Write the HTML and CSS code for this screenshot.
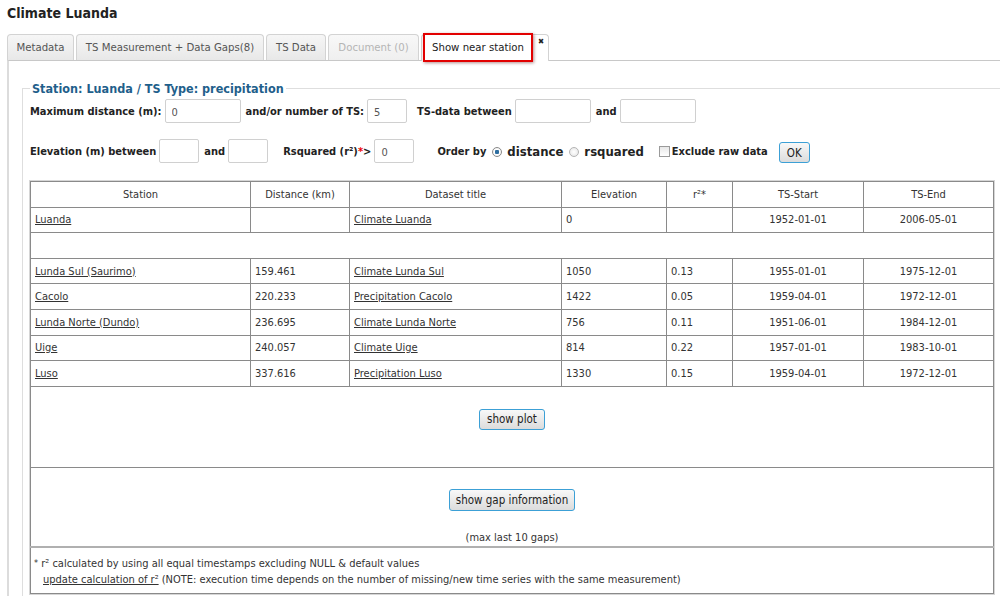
FILE: index.html
```html
<!DOCTYPE html>
<html>
<head>
<meta charset="utf-8">
<title>Climate Luanda</title>
<link rel="stylesheet" href="styles.css">
</head>
<body>
<h1 class="title">Climate Luanda</h1>
<div class="tabs">
  <ul class="tab-nav">
    <li class="tab t-meta">Metadata</li>
    <li class="tab t-meas">TS Measurement + Data Gaps(8)</li>
    <li class="tab t-data">TS Data</li>
    <li class="tab t-doc disabled">Document (0)</li>
    <li class="tab active"><span class="tab-label">Show near station</span><span class="tab-close">&#x2716;</span></li>
  </ul>
  <div class="panel">
    <fieldset class="station">
      <legend class="legend">Station: Luanda / TS Type: precipitation</legend>
      <div class="form-row row1">
        <label class="lbl">Maximum distance (m):</label>
        <input class="inp w76" type="text" value="0">
        <label class="lbl">and/or number of TS:</label>
        <input class="inp w40" type="text" value="5">
        <label class="lbl gap-l">TS-data between</label>
        <input class="inp w76" type="text">
        <label class="lbl">and</label>
        <input class="inp w76" type="text">
      </div>
      <div class="form-row row2">
        <label class="lbl">Elevation (m) between</label>
        <input class="inp w40" type="text">
        <label class="lbl">and</label>
        <input class="inp w40" type="text">
        <label class="lbl gap-m">Rsquared (r²)<span class="req">*</span>&gt;</label>
        <input class="inp w40" type="text" value="0">
        <label class="lbl gap-l2">Order by</label>
        <input class="radio" type="radio" name="ord" checked>
        <label class="lbl big">distance</label>
        <input class="radio" type="radio" name="ord">
        <label class="lbl big">rsquared</label>
        <input class="check" type="checkbox">
        <label class="lbl tight-l">Exclude raw data</label>
        <button class="btn ok">OK</button>
      </div>
      <table class="grid">
        <colgroup>
          <col class="c1"><col class="c2"><col class="c3"><col class="c4"><col class="c5"><col class="c6"><col class="c7">
        </colgroup>
        <thead>
          <tr><th>Station</th><th>Distance (km)</th><th>Dataset title</th><th>Elevation</th><th>r²*</th><th>TS-Start</th><th>TS-End</th></tr>
        </thead>
        <tbody>
          <tr><td><a href="#">Luanda</a></td><td></td><td><a href="#">Climate Luanda</a></td><td>0</td><td></td><td class="ctr">1952-01-01</td><td class="ctr">2006-05-01</td></tr>
          <tr><td colspan="7" class="blank"></td></tr>
          <tr><td><a href="#">Lunda Sul (Saurimo)</a></td><td>159.461</td><td><a href="#">Climate Lunda Sul</a></td><td>1050</td><td>0.13</td><td class="ctr">1955-01-01</td><td class="ctr">1975-12-01</td></tr>
          <tr><td><a href="#">Cacolo</a></td><td>220.233</td><td><a href="#">Precipitation Cacolo</a></td><td>1422</td><td>0.05</td><td class="ctr">1959-04-01</td><td class="ctr">1972-12-01</td></tr>
          <tr><td><a href="#">Lunda Norte (Dundo)</a></td><td>236.695</td><td><a href="#">Climate Lunda Norte</a></td><td>756</td><td>0.11</td><td class="ctr">1951-06-01</td><td class="ctr">1984-12-01</td></tr>
          <tr><td><a href="#">Uige</a></td><td>240.057</td><td><a href="#">Climate Uige</a></td><td>814</td><td>0.22</td><td class="ctr">1957-01-01</td><td class="ctr">1983-10-01</td></tr>
          <tr><td><a href="#">Luso</a></td><td>337.616</td><td><a href="#">Precipitation Luso</a></td><td>1330</td><td>0.15</td><td class="ctr">1959-04-01</td><td class="ctr">1972-12-01</td></tr>
          <tr><td colspan="7" class="plot-cell"><button class="btn">show plot</button></td></tr>
          <tr><td colspan="7" class="gap-cell"><button class="btn">show gap information</button><div class="gap-note">(max last 10 gaps)</div></td></tr>
          <tr><td colspan="7" class="foot-cell">
            <div class="foot1"><span class="star">*</span> r² calculated by using all equal timestamps excluding NULL &amp; default values</div>
            <div class="foot2"><a href="#">update calculation of r²</a> (NOTE: execution time depends on the number of missing/new time series with the same measurement)</div>
          </td></tr>
        </tbody>
      </table>
    </fieldset>
  </div>
</div>
</body>
</html>
```
FILE: styles.css
```css
html, body {
  margin: 0;
  padding: 0;
  background: #fff;
  overflow: hidden;
}
body {
  width: 1000px;
  height: 596px;
  font-family: "DejaVu Sans Condensed", "DejaVu Sans", sans-serif;
  font-size: 11px;
  color: #333;
}
.title {
  margin: 0;
  padding: 5px 0 0 7px;
  height: 30px;
  box-sizing: border-box;
  font-size: 14px;
  font-weight: bold;
  color: #222;
}
.tabs {
  margin-left: 7px;
  width: 1020px;
}
.tab-nav {
  list-style: none;
  margin: 0;
  padding: 0;
  display: flex;
  height: 30px;
  align-items: flex-end;
  position: relative;
  z-index: 2;
}
.tab {
  height: 25px;
  line-height: 25px;
  padding: 0;
  margin-right: 2px;
  border: 1px solid #d3d3d3;
  border-bottom: none;
  border-radius: 4px 4px 0 0;
  background: linear-gradient(#f6f6f6, #e8e8e8);
  color: #555;
  font-size: 11.3px;
  text-align: center;
  box-sizing: content-box;
}
.t-meta { width: 65px; }
.t-meas { width: 186px; }
.t-data { width: 58px; }
.t-doc { width: 89px; }
.tab.disabled {
  color: #b5b5b5;
  background: linear-gradient(#f8f8f8, #efefef);
}
.tab.active {
  background: #fff;
  color: #222;
  height: 26px;
  margin-bottom: -1px;
  padding: 0 24px 0 10px;
  text-align: left;
  position: relative;
}
.tab-label {
  position: relative;
}
.tab-label::after {
  content: "";
  position: absolute;
  left: -9px;
  right: -9px;
  top: -8px;
  height: 29px;
  border: 2px solid #e20000;
  box-shadow: 1px 1px 3px rgba(90, 0, 0, 0.45);
  box-sizing: border-box;
  pointer-events: none;
}
.tab-close {
  position: absolute;
  right: 4px;
  top: 2px;
  font-size: 8px;
  line-height: 10px;
  color: #222;
}
.panel {
  border-top: 1px solid #c8c8c8;
  border-left: 2px solid #dcdcdc;
  height: 560px;
  padding: 20px 0 0 13px;
  box-sizing: border-box;
}
.station {
  margin: 0;
  padding: 0 0 0 7px;
  border: 1px solid #dedede;
  border-right: none;
  min-inline-size: 0;
}
.legend {
  color: #1f5f8b;
  font-size: 12.5px;
  font-weight: bold;
  padding: 0 2px;
  margin-left: 0;
}
.form-row {
  display: flex;
  align-items: center;
  height: 24px;
}
.row1 {
  margin-top: 3px;
}
.row2 {
  margin-top: 16px;
}
.lbl {
  font-weight: bold;
  color: #222;
  font-size: 11px;
  margin-right: 3px;
}
.inp {
  height: 24px;
  box-sizing: border-box;
  border: 1px solid #d0d0d0;
  border-radius: 2px;
  padding: 3px 6px 0;
  font-family: inherit;
  font-size: 11px;
  color: #555;
  margin: 0 5px 0 0;
  background: #fff;
}
.w76 { width: 76px; }
.w40 { width: 40px; }
.gap-l { margin-left: 5px; }
.gap-m { margin-left: 10px; }
.gap-l2 { margin-left: 18px; margin-right: 6px; }
.req { color: #e00; }
.big {
  font-size: 13px;
  margin: 0 6px 0 5px;
}
.radio {
  appearance: none;
  -webkit-appearance: none;
  width: 10px;
  height: 10px;
  margin: 2px 0 0 0;
  border: 1px solid #b4b4b4;
  border-radius: 50%;
  background: radial-gradient(#fff, #e4e4e4);
  box-sizing: border-box;
}
.radio:checked {
  background: radial-gradient(circle, #2d6ea0 0 2px, #fff 2.5px, #e4e4e4 100%);
  border-color: #8a8a8a;
}
.check {
  appearance: none;
  -webkit-appearance: none;
  width: 11px;
  height: 11px;
  margin: 1px 2px 0 9px;
  border: 1px solid #9a9a9a;
  background: linear-gradient(#e8e8e8, #fff);
  box-sizing: border-box;
}
.tight-l { margin-right: 11px; }
.btn {
  font-family: inherit;
  font-size: 11.5px;
  color: #222;
  border: 1px solid #3ca0d6;
  border-radius: 3px;
  background: linear-gradient(#f8f8f8, #dcdcdc);
  height: 21px;
  padding: 0 7px;
  cursor: pointer;
}
.ok {
  margin-top: 3px;
  width: 31px;
  padding: 0;
}
.grid {
  margin: 18px 0 0 0;
  width: 963px;
  border-collapse: collapse;
  border: 1px solid #666;
  box-shadow: 0 0 0 1px #d6d6d6;
  table-layout: fixed;
  margin-bottom: 10px;
}
.c1 { width: 220px; }
.c2 { width: 99px; }
.c3 { width: 212px; }
.c4 { width: 105px; }
.c5 { width: 66px; }
.c6 { width: 131px; }
.c7 { width: 130px; }
.grid th, .grid td {
  border: 1px solid #8a8a8a;
  height: 24.6px;
  padding: 0 4px;
  text-align: left;
  color: #333;
  font-size: 11px;
}
.grid th {
  font-weight: normal;
  text-align: center;
}
.grid td.ctr { text-align: center; }
.grid a { color: #333; }
.grid .plot-cell {
  text-align: center;
  height: 81px;
  vertical-align: top;
  padding-top: 22px;
  box-sizing: border-box;
}
.grid .gap-cell {
  text-align: center;
  height: 80px;
  vertical-align: top;
  padding-top: 21px;
  box-sizing: border-box;
  border-top: 1px solid #555;
  border-bottom: 2px solid #b0b0b0;
}
.gap-cell .btn { height: 22px; padding: 0 6px; }
.gap-note {
  margin-top: 20px;
  line-height: 13px;
}
.grid .foot-cell {
  height: 44px;
  padding: 7px 0 5px 3px;
  box-sizing: border-box;
  vertical-align: top;
}
.foot1 { line-height: 16px; }
.foot2 { line-height: 16px; padding-left: 9px; }
.star { font-size: 9px; vertical-align: 1px; }
```
